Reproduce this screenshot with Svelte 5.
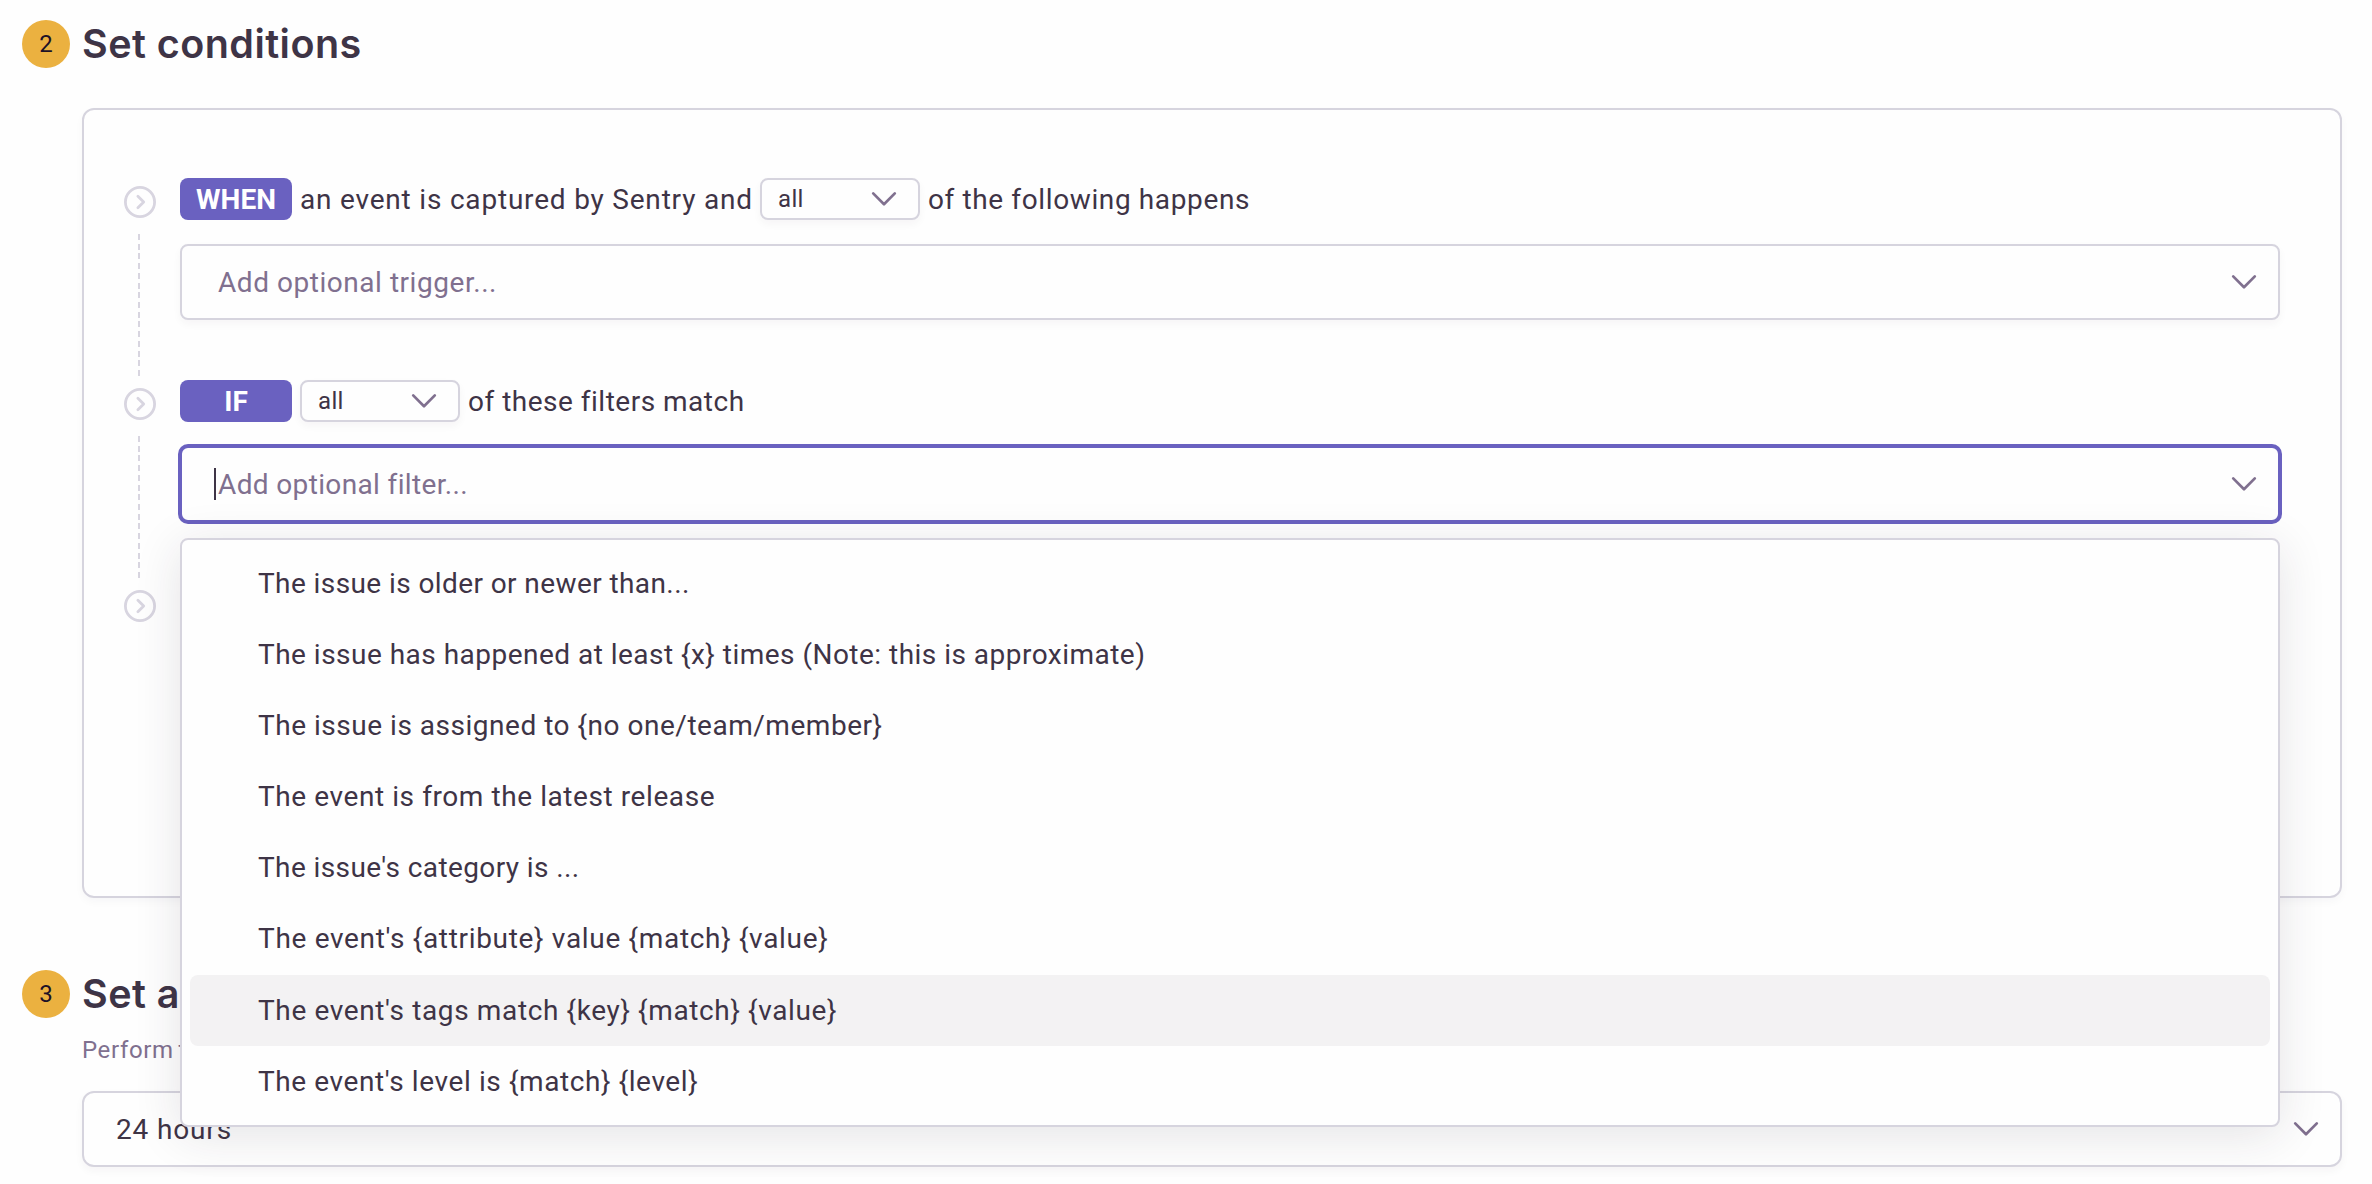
<script>
  // `tracking` is the letter spacing in pixels for each label
  const filters = [
    { label: 'The issue is older or newer than...', tracking: 0.41 },
    { label: 'The issue has happened at least {x} times (Note: this is approximate)', tracking: 0.48 },
    { label: 'The issue is assigned to {no one/team/member}', tracking: 0.52 },
    { label: 'The event is from the latest release', tracking: 0.58 },
    { label: "The issue's category is ...", tracking: 0.4 },
    { label: "The event's {attribute} value {match} {value}", tracking: 0.68 },
    { label: "The event's tags match {key} {match} {value}", tracking: 0.63 },
    { label: "The event's level is {match} {level}", tracking: 0.6 }
  ];
  let active = $state(6);
</script>

{#snippet chevron()}
  <svg class="chevron" width="26" height="16" viewBox="0 0 26 16">
    <path d="M2.2 2.4 13 13.2 23.8 2.4" />
  </svg>
{/snippet}

{#snippet stepIcon()}
  <svg class="step-icon" width="32" height="32" viewBox="0 0 32 32">
    <circle cx="16" cy="16" r="14.6" />
    <path d="M13.9 10.2 19.7 16 13.9 21.8" />
  </svg>
{/snippet}

<main>
  <header class="section-head">
    <span class="number">2</span>
    <h2>Set conditions</h2>
  </header>

  <section class="panel">
    <div class="step">
      <div class="rail">
        {@render stepIcon()}
        <span class="line"></span>
      </div>
      <div class="body">
        <div class="sentence">
          <span class="badge">WHEN</span>
          <span class="lead">an event is captured by Sentry and</span>
          <div class="mini-select"><span>all</span>{@render chevron()}</div>
          <span class="tail">of the following happens</span>
        </div>
        <div class="field"><span class="placeholder">Add optional trigger...</span>{@render chevron()}</div>
      </div>
    </div>

    <div class="step">
      <div class="rail">
        {@render stepIcon()}
        <span class="line"></span>
      </div>
      <div class="body">
        <div class="sentence">
          <span class="badge">IF</span>
          <div class="mini-select"><span>all</span>{@render chevron()}</div>
          <span class="tail tight">of these filters match</span>
        </div>
        <div class="anchor">
          <div class="field focused">
            <span class="caret"></span>
            <span class="placeholder tight">Add optional filter...</span>{@render chevron()}
          </div>
          <ul class="menu">
            {#each filters as f, i}
              <li class:active={i === active} style="letter-spacing: {f.tracking}px">{f.label}</li>
            {/each}
          </ul>
        </div>
      </div>
    </div>

    <div class="step">
      <div class="rail">{@render stepIcon()}</div>
    </div>
  </section>

  <header class="section-head">
    <span class="number">3</span>
    <h2>Set actions</h2>
  </header>
  <div class="actions">
    <p>Perform the actions above</p>
    <div class="field interval"><span>24 hours</span>{@render chevron()}</div>
  </div>
</main>

<style>
  :global(body) {
    background: #fefefe;
    overflow: hidden;
  }
  main {
    box-sizing: border-box;
    width: 2372px;
    height: 1184px;
    padding: 20px 30px 0 22px;
    overflow: hidden;
    font: 400 28px/42px Roboto, 'Liberation Sans', sans-serif;
    color: #3e3446;
  }
  main * {
    box-sizing: border-box;
  }
  .section-head {
    display: flex;
    align-items: center;
    gap: 12px;
    height: 48px;
  }
  .number {
    width: 48px;
    height: 48px;
    border-radius: 50%;
    background: #ebb140;
    color: #1d1127;
    font-size: 24px;
    line-height: 48px;
    text-align: center;
  }
  h2 {
    margin: 0;
    font: 600 39.5px/48px Inter, Roboto, sans-serif;
    letter-spacing: 0.45px;
  }
  .panel {
    height: 790px;
    margin: 40px 0 72px 60px;
    padding: 68px 60px 0 40px;
    border: 2px solid #d6d4de;
    border-radius: 12px;
    box-shadow: 0 4px 8px rgba(43, 34, 51, 0.03);
  }
  .step {
    display: grid;
    grid-template-columns: 32px minmax(0, 1fr);
    column-gap: 24px;
    height: 202px;
  }
  .rail {
    display: flex;
    flex-direction: column;
    align-items: center;
    gap: 16px;
    padding-top: 8px;
  }
  .step-icon {
    display: block;
    flex: none;
    fill: none;
    stroke: #d8d5e0;
    stroke-width: 2.8;
    stroke-linecap: round;
    stroke-linejoin: round;
  }
  .line {
    width: 2px;
    height: 142px;
    margin-right: 2px;
    background: repeating-linear-gradient(#d8d5e0 0 6px, transparent 6px 9.714px);
  }
  .sentence {
    display: flex;
    align-items: center;
    gap: 8px;
    height: 42px;
    margin-bottom: 24px;
    line-height: 40px;
    white-space: nowrap;
  }
  .badge,
  .lead,
  .tail {
    padding-top: 2px;
  }
  .badge {
    width: 112px;
    height: 42px;
    border-radius: 8px;
    background: #6a61c0;
    color: #fff;
    font-weight: 700;
    text-align: center;
  }
  .lead {
    width: 452px;
    letter-spacing: 0.8px;
  }
  .tail {
    letter-spacing: 0.62px;
  }
  .tail.tight {
    letter-spacing: 0.5px;
  }
  .mini-select,
  .field {
    display: flex;
    align-items: center;
    justify-content: space-between;
    border: 2px solid #d6d4de;
    border-radius: 8px;
    background: #fefefe;
    box-shadow: 0 4px 8px rgba(43, 34, 51, 0.04);
  }
  .mini-select {
    width: 160px;
    height: 42px;
    padding: 0 21px 0 16px;
    font-size: 24px;
    letter-spacing: 0.35px;
  }
  .chevron {
    display: block;
    fill: none;
    stroke: #80708f;
    stroke-width: 2.7;
    stroke-linecap: round;
    stroke-linejoin: round;
  }
  .field {
    height: 76px;
    padding: 0 21px 0 36px;
  }
  .field > span:not(.caret) {
    padding-top: 2px;
  }
  .placeholder {
    color: #80708f;
    letter-spacing: 0.54px;
  }
  .placeholder.tight {
    letter-spacing: 0.36px;
  }
  .anchor {
    position: relative;
  }
  .focused {
    justify-content: flex-start;
    padding-left: 32px;
    border-color: #6a61c0;
    box-shadow: 0 0 0 2px #6a61c0;
  }
  .focused .chevron {
    margin-left: auto;
  }
  .caret {
    width: 2px;
    height: 32px;
    margin-right: 2px;
    background: #3e3446;
  }
  .menu {
    position: absolute;
    top: 92px;
    left: 0;
    right: 0;
    height: 589px;
    margin: 0;
    padding: 8px;
    border: 2px solid #d6d4de;
    border-radius: 8px;
    background: #fefefe;
    box-shadow: 0 8px 48px rgba(43, 34, 51, 0.12);
    list-style: none;
  }
  .menu li {
    height: 71.1px;
    padding-left: 68px;
    border-radius: 8px;
    line-height: 71.6px;
    white-space: nowrap;
  }
  .menu .active {
    background: #f3f2f3;
  }
  .actions {
    margin-left: 60px;
  }
  .actions p {
    margin: 15px 0 23px;
    color: #80708f;
    font-size: 24px;
    line-height: 35px;
    letter-spacing: 0.63px;
    word-spacing: -1.8px;
  }
  .interval {
    padding-left: 32px;
    border-radius: 12px;
    letter-spacing: 0.85px;
  }
</style>
